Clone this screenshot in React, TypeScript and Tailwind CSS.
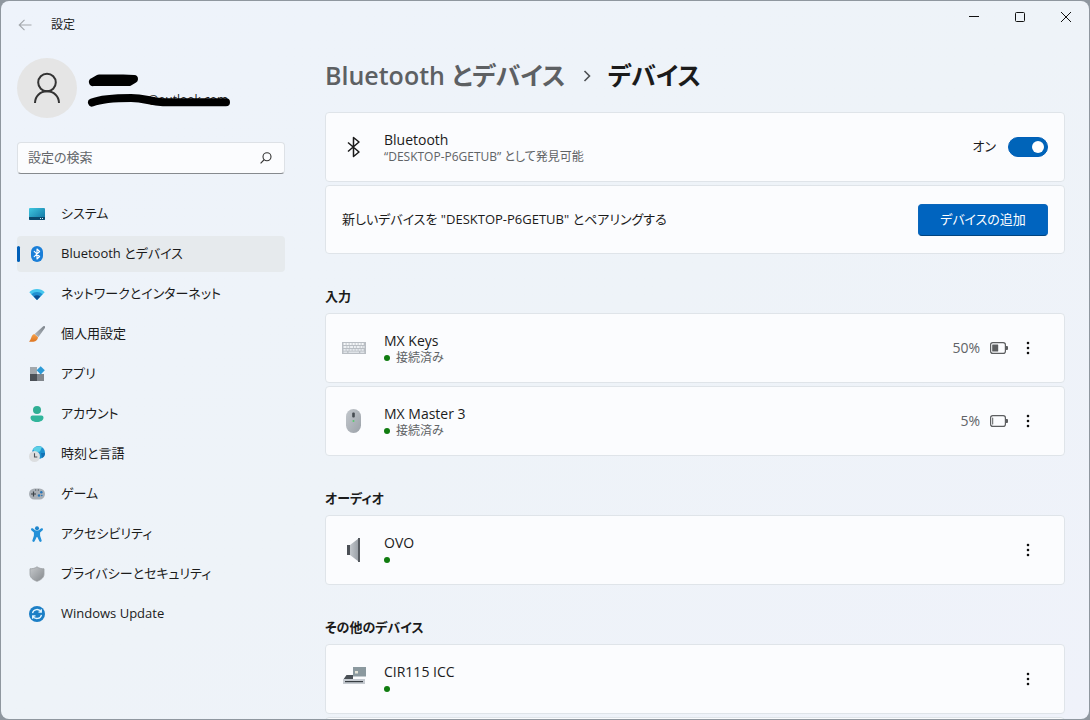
import type { ReactNode } from "react";

type IconProps = { className?: string };

function SystemIcon() {
  return (
    <svg viewBox="0 0 16 16" className="size-4">
      <defs>
        <linearGradient id="sys" x1="0" y1="0" x2="1" y2="1">
          <stop offset="0" stopColor="#3fc8e0" />
          <stop offset="1" stopColor="#0f6f9f" />
        </linearGradient>
      </defs>
      <rect y="2" width="16" height="12" rx="1" fill="url(#sys)" />
      <path d="M0 11h16v2a1 1 0 0 1-1 1H1a1 1 0 0 1-1-1z" fill="#0b4a6e" />
      <path d="M11 12h1v1h-1zM13 12h1v1h-1z" fill="#d8f2fb" />
    </svg>
  );
}

function BluetoothBadgeIcon() {
  return (
    <svg viewBox="0 0 16 16" className="size-4">
      <rect x="2" y="0" width="12" height="16" rx="6" fill="#1a7fd8" />
      <path d="M5.2 5.3 10.6 10.5 8 13V3l2.6 2.5-5.4 5.2" fill="none" stroke="#fff" strokeWidth="1.1" strokeLinejoin="round" strokeLinecap="round" />
    </svg>
  );
}

function NetworkIcon() {
  return (
    <svg viewBox="0 0 16 16" className="size-4">
      <path d="M0.3 6.2a10.9 10.9 0 0 1 15.4 0L8 14z" fill="#45c6ee" />
      <path d="M2.4 8.3a7.9 7.9 0 0 1 11.2 0L8 14z" fill="#1f8fd0" />
      <path d="M4.7 10.6a4.7 4.7 0 0 1 6.6 0L8 14z" fill="#0c4f94" />
    </svg>
  );
}

function BrushIcon() {
  return (
    <svg viewBox="0 0 16 16" className="size-4">
      <defs>
        <linearGradient id="brush" x1="1" y1="0" x2="0" y2="1">
          <stop offset="0" stopColor="#7b838b" />
          <stop offset="1" stopColor="#b4b9be" />
        </linearGradient>
        <linearGradient id="bristle" x1="0" y1="0" x2="0" y2="1">
          <stop offset="0" stopColor="#f5a14a" />
          <stop offset="1" stopColor="#dd7420" />
        </linearGradient>
      </defs>
      <path d="M15.7.3c.6.6.3 1.500 0 2L9.300 11.200 5.700 8.100 13.700.7c.5-.5 1.400-.9 2-.4z" fill="url(#brush)" />
      <path d="M5.300 8 9 11.300c-.2 3.200-3.200 4.500-5.400 4.500H.6c-.5 0-.6-.5-.2-.7 2-1.300 1.500-6.200 4.900-7.100z" fill="url(#bristle)" />
    </svg>
  );
}

function AppsIcon() {
  return (
    <svg viewBox="0 0 16 16" className="size-4">
      <path d="M1 1h7v7H1z" fill="#a3a8ad" />
      <path d="M1 8h7v7H1z" fill="#4b5056" />
      <path d="M8 8h7v7H8z" fill="#81868c" />
      <path d="m11.700.2 4.100 4.100-4.100 4.100-4.100-4.100z" fill="#2c9ad6" />
    </svg>
  );
}

function AccountIcon() {
  return (
    <svg viewBox="0 0 16 16" className="size-4">
      <circle cx="8" cy="4" r="4" fill="#2fae94" />
      <path d="M3.500 9.500h9A2 2 0 0 1 14.500 11.500c0 3-3 4.500-6.500 4.500s-6.500-1.500-6.500-4.500a2 2 0 0 1 2-2z" fill="#31b59b" />
    </svg>
  );
}

function TimeIcon() {
  return (
    <svg viewBox="0 0 16 16" className="size-4">
      <circle cx="9.500" cy="6.500" r="6.500" fill="#1f93cf" />
      <path d="M4 3.200C6 .2 10-.6 13 1l-2 4.500-5 1z" fill="#5cd0e6" />
      <path d="M12 7h4c0 3-1 4-3 5z" fill="#1472b5" />
      <circle cx="5.500" cy="10.500" r="5.500" fill="#dcdee0" />
      <path d="M5.500 7.300v3.700h2.800" fill="none" stroke="#4c5156" strokeWidth="1.100" />
    </svg>
  );
}

function GameIcon() {
  return (
    <svg viewBox="0 0 16 16" className="size-4">
      <rect y="2.500" width="16" height="11" rx="5.500" fill="#a9afb6" />
      <path d="M4.500 5.500v5M2 8h5" stroke="#3c4248" strokeWidth="1.200" />
      <path d="M6 4h1.200M8.800 4H10" stroke="#4b5157" strokeWidth="1" />
      <circle cx="12.300" cy="6.300" r="1.200" fill="#2675b8" />
      <circle cx="10" cy="9.500" r="1.200" fill="#2675b8" />
      <circle cx="12.800" cy="9.500" r=".8" fill="#2675b8" />
    </svg>
  );
}

function AccessibilityIcon() {
  return (
    <svg viewBox="0 0 16 16" className="size-4">
      <circle cx="8" cy="2.200" r="2" fill="#1c84cc" />
      <path d="M2.300 2.600c.5-.6 1.100-.6 1.800-.1C5.300 3.600 6.500 4.600 8 4.600s2.700-1 3.900-2.100c.7-.5 1.300-.5 1.800.1.500.7.300 1.300-.3 1.900l-2.300 2v3.200l1.500 4.600c.2.700 0 1.300-.6 1.500-.7.300-1.300 0-1.600-.6L8.300 11h-.6l-2.100 4.200c-.3.600-.9.900-1.600.6-.6-.2-.8-.8-.6-1.500l1.500-4.600V6.500l-2.300-2c-.6-.6-.8-1.200-.3-1.900z" fill="#2390d8" />
    </svg>
  );
}

function ShieldIcon() {
  return (
    <svg viewBox="0 0 16 16" className="size-4">
      <defs>
        <linearGradient id="shield" x1="0" y1="0" x2="1" y2="1">
          <stop offset="0" stopColor="#c6c9cc" />
          <stop offset="1" stopColor="#85898d" />
        </linearGradient>
      </defs>
      <path d="M8 .8c2 1.500 4.500 2 7 2V8c0 3.600-3 6-7 7.300C4 14 1 11.600 1 8V2.800c2.500 0 5-.5 7-2z" fill="url(#shield)" stroke="#9a9ea2" strokeWidth=".8" />
    </svg>
  );
}

function UpdateIcon() {
  return (
    <svg viewBox="0 0 16 16" className="size-4">
      <circle cx="8" cy="8" r="8" fill="#1c7fc6" />
      <path d="M3.500 7.200A4.600 4.600 0 0 1 12 5.800M12.500 8.800A4.600 4.600 0 0 1 4 10.200M12.300 3.300v2.800H9.500M3.700 12.700V9.900h2.800" fill="none" stroke="#e4f5ff" strokeWidth="1.300" />
    </svg>
  );
}

function KeyboardIcon() {
  return (
    <svg viewBox="0 0 24 24" className="size-6">
      <rect y="6" width="24" height="12" fill="#b9bec4" />
      <path d="M1.500 8h21" stroke="#f4f6f8" strokeWidth="2" strokeDasharray="2.200 .8" />
      <path d="M1.500 11h21" stroke="#edf0f3" strokeWidth="2" strokeDasharray="3 .8 2 .8" />
      <path d="M1.500 13.800h21" stroke="#e6eaee" strokeWidth="1.800" strokeDasharray="2.200 .8" />
      <path d="M1.500 16.300h3.700M6.500 16.300h10.500M18.300 16.300h4" stroke="#dfe3e8" strokeWidth="1.400" />
    </svg>
  );
}

function MouseIcon() {
  return (
    <svg viewBox="0 0 24 24" className="size-6">
      <defs>
        <linearGradient id="mouse" x1="0" y1="0" x2="1" y2="1">
          <stop offset="0" stopColor="#c3c8cd" />
          <stop offset="1" stopColor="#9ba1a8" />
        </linearGradient>
      </defs>
      <rect x="4" width="15" height="24" rx="7.500" fill="url(#mouse)" />
      <rect x="10.200" y="3.500" width="2.600" height="5" rx="1" fill="#454b51" />
      <circle cx="11.500" cy="12" r="1" fill="#57c86d" />
    </svg>
  );
}

function SpeakerIcon() {
  return (
    <svg viewBox="0 0 24 24" className="size-6">
      <defs>
        <linearGradient id="spk" x1="0" y1="0" x2="1" y2="0">
          <stop offset="0" stopColor="#c2c7cc" />
          <stop offset="1" stopColor="#999fa6" />
        </linearGradient>
      </defs>
      <path d="M8 7 16.500.5v23L8 17z" fill="url(#spk)" />
      <path d="M5 7h3v10H5z" fill="#4b5056" />
      <path d="M16 0h2v24h-2z" fill="#54595f" />
    </svg>
  );
}

function CardReaderIcon() {
  return (
    <svg viewBox="0 0 24 24" className="size-6">
      <path d="M4.500 8H11v4h11v1H1z" fill="#4a5056" />
      <path d="M11 0h13v9.500H11z" fill="#8b999f" />
      <path d="M13 4h3v2.500h-3z" fill="#e5e4d8" />
      <path d="M1 12h22v5H1z" fill="#c5cad0" />
      <path d="M3 14h18v1.200H3z" fill="#373d43" />
    </svg>
  );
}

function BluetoothIcon({ className }: IconProps) {
  return (
    <svg viewBox="0 0 24 24" className={className}>
      <path d="M6 7.500 17 17l-5.500 4.500v-19L17 7 6 16.500" fill="none" stroke="#1b1b1b" strokeWidth="1.500" strokeLinejoin="round" />
    </svg>
  );
}

function BatteryIcon({ level }: { level: number }) {
  return (
    <svg viewBox="0 0 18 12" className="h-3 w-[18px]">
      <rect x=".6" y=".6" width="14.800" height="10.800" rx="2.200" fill="none" stroke="#5c5e60" strokeWidth="1.200" />
      <path d="M16 4h1a1 1 0 0 1 1 1v2a1 1 0 0 1-1 1h-1z" fill="#5c5e60" />
      <rect x="2.200" y="2.500" width={Math.max(1, (12 * level) / 100)} height="7" rx=".5" fill="#5c5e60" />
    </svg>
  );
}

const navItems: { label: string; icon: ReactNode; active?: boolean }[] = [
  { label: "システム", icon: <SystemIcon /> },
  { label: "Bluetooth とデバイス", icon: <BluetoothBadgeIcon />, active: true },
  { label: "ネットワークとインターネット", icon: <NetworkIcon /> },
  { label: "個人用設定", icon: <BrushIcon /> },
  { label: "アプリ", icon: <AppsIcon /> },
  { label: "アカウント", icon: <AccountIcon /> },
  { label: "時刻と言語", icon: <TimeIcon /> },
  { label: "ゲーム", icon: <GameIcon /> },
  { label: "アクセシビリティ", icon: <AccessibilityIcon /> },
  { label: "プライバシーとセキュリティ", icon: <ShieldIcon /> },
  { label: "Windows Update", icon: <UpdateIcon /> },
];

type Device = { name: string; status?: string; battery?: number; icon: ReactNode };

const sections: { title: string; devices: Device[] }[] = [
  {
    title: "入力",
    devices: [
      { name: "MX Keys", status: "接続済み", battery: 50, icon: <KeyboardIcon /> },
      { name: "MX Master 3", status: "接続済み", battery: 5, icon: <MouseIcon /> },
    ],
  },
  { title: "オーディオ", devices: [{ name: "OVO", icon: <SpeakerIcon /> }] },
  { title: "その他のデバイス", devices: [{ name: "CIR115 ICC", icon: <CardReaderIcon /> }] },
];

const cardClass = "flex shrink-0 items-center rounded border border-[#dfe4e9] bg-[#fbfcfe] px-4";

function TitleBar() {
  return (
    <header className="flex h-12 shrink-0 items-center">
      <button type="button" aria-label="戻る" className="ml-4 flex size-4 items-center justify-center">
        <svg viewBox="0 0 14 12" className="h-3 w-[14px]">
          <path d="M6.500.8 1.200 6l5.300 5.200M1.500 6h12" fill="none" stroke="#a3a7ac" strokeWidth="1.100" />
        </svg>
      </button>
      <h1 className="ml-[18px] text-xs">設定</h1>
      <div className="ml-auto flex self-start">
        <button type="button" aria-label="最小化" className="flex h-8 w-[46px] items-center justify-center">
          <svg viewBox="0 0 12 12" className="size-3">
            <path d="M1 5.500h10" stroke="#111" />
          </svg>
        </button>
        <button type="button" aria-label="最大化" className="flex h-8 w-[46px] items-center justify-center">
          <svg viewBox="0 0 12 12" className="size-3">
            <rect x="1.500" y="1.500" width="9" height="9" rx="1" fill="none" stroke="#111" />
          </svg>
        </button>
        <button type="button" aria-label="閉じる" className="flex h-8 w-[46px] items-center justify-center">
          <svg viewBox="0 0 12 12" className="size-3">
            <path d="m1 1 10 10M11 1 1 11" stroke="#111" />
          </svg>
        </button>
      </div>
    </header>
  );
}

function Sidebar() {
  return (
    <aside className="flex w-[268px] shrink-0 flex-col">
      <div className="flex items-center">
        <span className="flex size-[60px] items-center justify-center rounded-full bg-[#e5e5e5]">
          <svg viewBox="0 0 28 32" className="h-8 w-7">
            <circle cx="14" cy="10.500" r="8.800" fill="none" stroke="#333" strokeWidth="2" />
            <path d="M2 31c0-6.500 5-11.700 12-11.700s12 5.200 12 11.700" fill="none" stroke="#333" strokeWidth="2" />
          </svg>
        </span>
        <div className="relative ml-[10px] h-10 w-[145px]">
          <p className="mt-6 pr-1 text-right text-xs">@outlook.com</p>
          <svg viewBox="0 0 144 40" className="absolute top-0 left-0 h-10 w-36">
            <path d="M6 14 12 10.500h24L47 11 42 14H6M14 12.500h24" fill="none" stroke="#000" strokeWidth="8" strokeLinecap="round" strokeLinejoin="round" />
            <path d="M5 34.500C14 31 30 30 44 30s18 3.500 32 4.200H139" fill="none" stroke="#000" strokeWidth="8" strokeLinecap="round" strokeLinejoin="round" />
          </svg>
        </div>
      </div>
      <label className="mt-6 flex h-8 items-center rounded border border-[#dde1e6] border-b-[#868a8e] bg-[#fbfcfe] pr-3 pl-[10px]">
        <input
          type="text"
          aria-label="設定の検索"
          placeholder="設定の検索"
          className="min-w-0 flex-1 bg-transparent text-[13px] outline-none placeholder:text-[#63666a]"
        />
        <svg viewBox="0 0 12 12" className="size-3">
          <circle cx="7" cy="4.800" r="4" fill="none" stroke="#333" strokeWidth="1.100" />
          <path d="M4.200 7.700.6 11.400" stroke="#333" strokeWidth="1.200" />
        </svg>
      </label>
      <nav className="mt-[22px] flex flex-col gap-1">
        {navItems.map((item) => (
          <a
            key={item.label}
            href="#"
            aria-current={item.active ? "page" : undefined}
            className={
              item.active
                ? "relative flex h-9 items-center gap-4 rounded bg-[#e6eaed] pl-3 text-[13px]"
                : "relative flex h-9 items-center gap-4 rounded pl-3 text-[13px]"
            }
          >
            {item.active && <span className="absolute top-[10px] left-0 h-4 w-[3px] rounded-full bg-[#005fb8]" />}
            {item.icon}
            <span>{item.label}</span>
          </a>
        ))}
      </nav>
    </aside>
  );
}

function DeviceCard({ device }: { device: Device }) {
  return (
    <article className={`${cardClass} h-[70px]`}>
      {device.icon}
      <div className="ml-[18px] flex-1 pt-[2px]">
        <h3 className="text-sm leading-[18px]">{device.name}</h3>
        <p className="flex h-4 items-center gap-[6px] text-xs text-[#606366]">
          <span className="size-[6px] rounded-full bg-[#107c10]" />
          {device.status}
        </p>
      </div>
      {device.battery !== undefined && (
        <div className="flex items-center gap-[10px] text-sm text-[#606366]">
          <span>{device.battery}%</span>
          <BatteryIcon level={device.battery} />
        </div>
      )}
      <button type="button" aria-label={`${device.name} のオプション`} className="mr-1 ml-1 flex size-8 items-center justify-center">
        <svg viewBox="0 0 4 14" className="h-[14px] w-1">
          <path d="M1 1h2v2H1zM1 6h2v2H1zM1 11h2v2H1z" fill="#111" stroke="#111" strokeWidth=".3" />
        </svg>
      </button>
    </article>
  );
}

export default function App() {
  return (
    <div
      lang="ja"
      className="h-screen bg-[#8f979f] p-px font-['Open_Sans','Noto_Sans_CJK_JP',sans-serif] text-[#1b1b1b] [font-feature-settings:'palt']"
    >
      <div className="flex h-full flex-col overflow-hidden rounded-lg bg-linear-to-br from-[#eef3fb] via-[#eef3f8] to-[#eff2fa]">
        <TitleBar />
        <div className="flex min-h-0 flex-1 gap-10 pt-[9px] pr-6 pl-4">
          <Sidebar />
          <main className="flex min-w-0 flex-1 flex-col overflow-y-auto [scrollbar-width:none]">
            <h2 className="flex h-9 shrink-0 items-center text-[25px] font-semibold">
              <a href="#" className="text-[#5d6063]">
                Bluetooth とデバイス
              </a>
              <svg viewBox="0 0 8 12" className="mx-[17px] h-3 w-2">
                <path d="m1.500 1 5 5-5 5" fill="none" stroke="#4d5053" strokeWidth="1.600" />
              </svg>
              <span>デバイス</span>
            </h2>

            <div className="mt-[18px] flex flex-col gap-[3px]">
              <div className={`${cardClass} h-[70px]`}>
                <BluetoothIcon className="size-6" />
                <div className="ml-[18px] flex-1 pt-[2px]">
                  <h3 className="text-sm leading-[18px]">Bluetooth</h3>
                  <p className="text-xs leading-4 text-[#606366]">“DESKTOP-P6GETUB” として発見可能</p>
                </div>
                <label className="flex items-center gap-3 text-[13px]">
                  オン
                  <input
                    type="checkbox"
                    role="switch"
                    defaultChecked
                    className="flex h-5 w-10 appearance-none items-center rounded-full border border-[#868a8e] px-[3px] before:size-3 before:rounded-full before:bg-[#606366] checked:justify-end checked:border-[#005fb8] checked:bg-[#0064b9] checked:before:bg-white"
                  />
                </label>
              </div>
              <div className={`${cardClass} h-[69px]`}>
                <p className="flex-1 text-[13px]">新しいデバイスを "DESKTOP-P6GETUB" とペアリングする</p>
                <button type="button" className="h-8 w-[130px] rounded border border-[#0a66bb] border-b-[#00447f] bg-[#0064bf] text-[13px] text-white">
                  デバイスの追加
                </button>
              </div>
            </div>

            {sections.map((section) => (
              <section key={section.title} className="mt-8 flex flex-col gap-[3px]">
                <h2 className="mb-1 h-5 text-[13px] leading-5 font-semibold">{section.title}</h2>
                {section.devices.map((device) => (
                  <DeviceCard key={device.name} device={device} />
                ))}
              </section>
            ))}
            <div className={`${cardClass} mt-[3px] h-[70px]`} />
          </main>
        </div>
      </div>
    </div>
  );
}
